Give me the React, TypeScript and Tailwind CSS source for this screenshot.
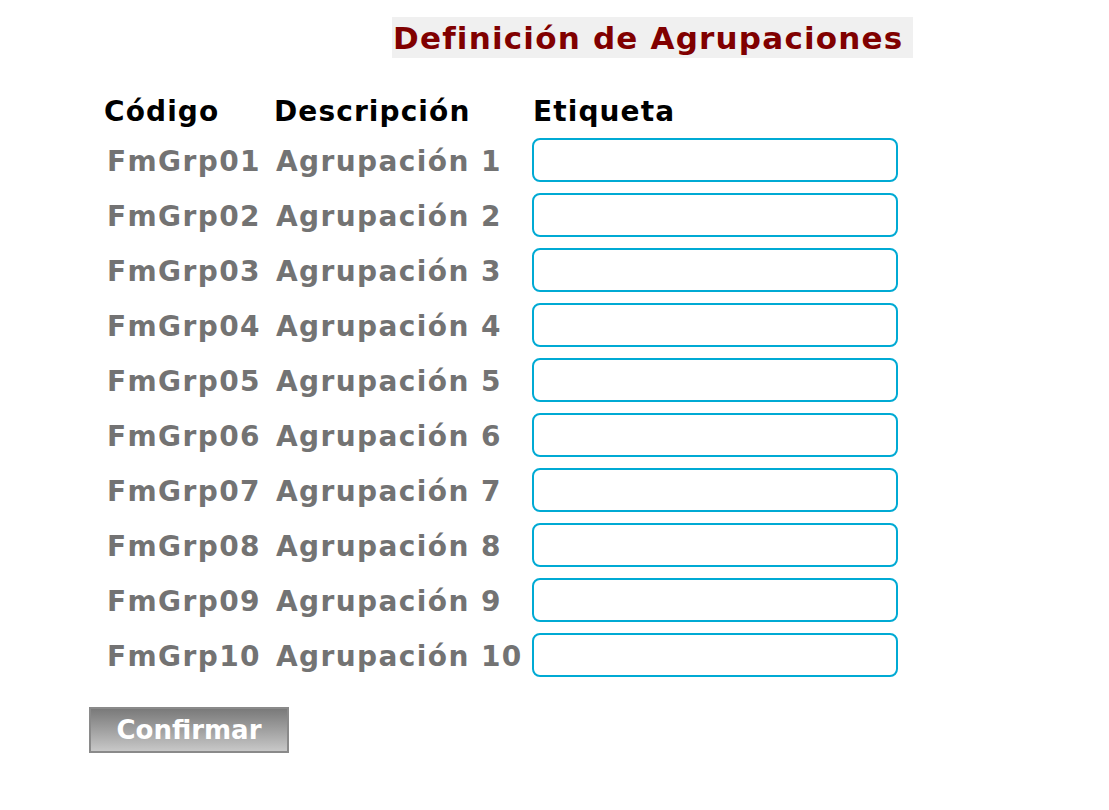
import React from 'react';

const rows = Array.from({ length: 10 }, (_, i) => ({
  code: `FmGrp${String(i + 1).padStart(2, '0')}`,
  desc: `Agrupación ${i + 1}`,
}));

const App: React.FC = () => {
  return (
    <div className="min-h-[810px] bg-white pt-[17px] font-bold" style={{ fontFamily: '"DejaVu Sans", Verdana, sans-serif' }}>
      <div className="flex justify-start pl-[392px]">
        <h1 className="h-[41px] w-[521px] bg-[#f0f0f0] pl-[1px] text-[31px] leading-[43px] tracking-[1.2px] text-[#800000]">
          Definición de Agrupaciones
        </h1>
      </div>

      <div className="mt-[36px] pl-[104px]">
        <div className="flex h-[36px] items-center text-[28px] tracking-[1.1px] text-black">
          <div className="w-[170px]">Código</div>
          <div className="w-[259px]">Descripción</div>
          <div>Etiqueta</div>
        </div>

        <div className="mt-[8px] flex flex-col gap-[11px]">
          {rows.map((row) => (
            <div key={row.code} className="flex h-[44px] items-center text-[28px] tracking-[1.4px] text-[#737373]">
              <div className="mt-[4px] w-[169px] pl-[3px]">{row.code}</div>
              <div className="mt-[4px] w-[259px] pl-[3px]">{row.desc}</div>
              <input
                type="text"
                className="h-[44px] w-[366px] rounded-[8px] border-2 border-[#00aad4] bg-white px-2 text-[18px] outline-none"
              />
            </div>
          ))}
        </div>
      </div>

      <div className="mt-[30px] pl-[89px]">
        <button className="h-[46px] w-[200px] border-2 border-[#8a8a8a] bg-gradient-to-b from-[#7a7a7a] to-[#c8c8c8] text-[26px] font-bold text-white">
          Confirmar
        </button>
      </div>
    </div>
  );
};

export default App;
